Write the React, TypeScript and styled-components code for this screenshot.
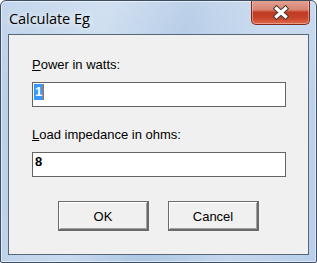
import React from "react";
import styled, { createGlobalStyle } from "styled-components";

const GlobalStyle = createGlobalStyle`
  html, body {
    margin: 0;
    padding: 0;
    background: #ffffff;
  }
  * {
    box-sizing: border-box;
  }
`;

const Window = styled.div`
  width: 317px;
  height: 263px;
  display: flex;
  flex-direction: column;
  border: 1px solid #3d4d62;
  border-radius: 6px 6px 2px 2px;
  background:
    linear-gradient(180deg, rgba(255, 255, 255, 0.18) 0%, rgba(255, 255, 255, 0) 40%),
    linear-gradient(100deg, #b7cee8 0%, #c8daee 30%, #aec7e4 52%, #c3d6ec 75%, #b9cfe9 100%);
  box-shadow: inset 0 0 0 1px rgba(255, 255, 255, 0.55);
  overflow: hidden;
`;

const TitleBar = styled.div`
  height: 33px;
  flex: none;
  display: flex;
  justify-content: space-between;
  align-items: flex-start;
`;

const Title = styled.div`
  padding: 7px 0 0 8px;
  font-family: "Open Sans", "Noto Sans", sans-serif;
  font-size: 14.6px;
  letter-spacing: -0.1px;
  color: #000000;
  text-shadow: 0 0 6px rgba(255, 255, 255, 0.9), 0 0 10px rgba(255, 255, 255, 0.6);
`;

const CloseButton = styled.div`
  width: 59px;
  height: 25px;
  margin: -1px 6px 0 0;
  display: flex;
  align-items: center;
  justify-content: center;
  border: 1px solid #7b2b20;
  border-top: none;
  border-radius: 0 0 5px 5px;
  background: linear-gradient(
    180deg,
    #e3a496 0%,
    #d88472 40%,
    #bf3b22 52%,
    #c6432a 75%,
    #e0694a 100%
  );
  box-shadow: inset 0 0 0 1px rgba(255, 220, 210, 0.45);
`;

const Client = styled.div`
  flex: 1;
  margin: 0 7px 7px 7px;
  border: 1px solid #56677c;
  background: #f0f0f0;
  padding: 22px 22px 0 23px;
  display: flex;
  flex-direction: column;
  font-family: "Liberation Sans", Arial, sans-serif;
  font-size: 13px;
  color: #000000;
`;

const Label = styled.div<{ $gap?: number }>`
  line-height: 15px;
  height: 15px;
  margin-top: ${(p) => p.$gap ?? 0}px;
  margin-bottom: 10px;

  u {
    text-decoration: underline;
    text-underline-offset: 1px;
  }
`;

const Field = styled.div`
  width: 254px;
  height: 25px;
  border: 1px solid #646464;
  background: #ffffff;
  padding: 1px 0 0 1px;
  display: flex;
  align-items: flex-start;
  font-weight: bold;
  line-height: 16px;
`;

const Selected = styled.span`
  height: 16px;
  padding: 0 1px;
  background: #3399ff;
  color: #ffffff;
`;

const Caret = styled.span`
  width: 1px;
  height: 16px;
  background: #cc6a1a;
`;

const Value = styled.span`
  padding-left: 1px;
`;

const ButtonRow = styled.div`
  margin-top: 24px;
  display: flex;
  justify-content: center;
  gap: 19px;
  padding-right: 1px;
`;

const Button = styled.div`
  width: 91px;
  height: 30px;
  display: flex;
  align-items: center;
  justify-content: center;
  border: 1px solid #6a6a6a;
  border-right-width: 2px;
  border-bottom-width: 2px;
  background: #f0f0f0;
  box-shadow: inset 1px 1px 0 #ffffff, inset -1px -1px 0 #a0a0a0;
  font-size: 13px;
  padding-top: 1px;
`;

const CloseIcon = () => (
  <svg width="18" height="15" viewBox="0 0 18 15">
    <path d="M4.5 3.5 L13.5 11.5 M13.5 3.5 L4.5 11.5" stroke="#4a3a36" strokeWidth="5.2" strokeLinecap="square" />
    <path d="M4.5 3.5 L13.5 11.5 M13.5 3.5 L4.5 11.5" stroke="#ffffff" strokeWidth="3.2" strokeLinecap="square" />
  </svg>
);

export default function App() {
  return (
    <>
      <GlobalStyle />
      <Window>
        <TitleBar>
          <Title>Calculate Eg</Title>
          <CloseButton>
            <CloseIcon />
          </CloseButton>
        </TitleBar>
        <Client>
          <Label>
            <u>P</u>ower in watts:
          </Label>
          <Field>
            <Selected>1</Selected>
            <Caret />
          </Field>
          <Label $gap={20}>
            <u>L</u>oad impedance in ohms:
          </Label>
          <Field>
            <Value>8</Value>
          </Field>
          <ButtonRow>
            <Button>OK</Button>
            <Button>Cancel</Button>
          </ButtonRow>
        </Client>
      </Window>
    </>
  );
}
